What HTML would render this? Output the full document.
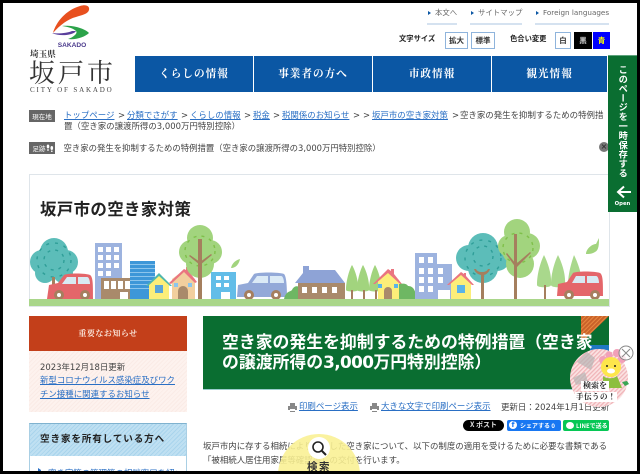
<!DOCTYPE html>
<html lang="ja"><head><meta charset="utf-8"><title>空き家の発生を抑制するための特例措置</title>
<style>
html,body{margin:0;padding:0;background:#fff;width:640px;height:474px;overflow:hidden}
#p{position:relative;width:640px;height:474px;overflow:hidden;background:#fff;font-family:"DejaVu Sans","Noto Sans CJK JP",sans-serif;color:#444;font-size:8.45px}
#p div,#p a{position:absolute;white-space:nowrap;line-height:1}
#p .j,#p .j a{font-family:"Noto Sans CJK JP",sans-serif}
a{color:#2a6fc4;text-decoration:underline}
.se{font-family:"Noto Serif CJK SC","Liberation Serif",serif}
#p .nav{top:56px;height:36px;background:#0b57a4;color:#fff;font-weight:700;font-size:10.6px;letter-spacing:1px;text-align:center;line-height:36px}
#p .lab{left:29px;width:26px;height:12px;background:#666;color:#fff;font-size:6.5px;line-height:12px;text-align:center}
#p .btn{top:32px;height:15px;border:1px solid #8fb4dc;background:#fff;color:#333;font-size:7.5px;font-weight:700;text-align:center;line-height:15px}
.ul{top:23px;height:2px;background:#d5e2f0}
.tl{top:9px;font-size:7.4px;color:#666}
.tri{width:0;height:0;border-left:3px solid #0b57a4;border-top:2px solid transparent;border-bottom:2px solid transparent;top:11px}
</style></head><body><div id="p">

<!-- logo -->
<svg style="position:absolute;left:0;top:0" width="130" height="60" viewBox="0 0 130 60">
<path d="M53 33C56 22 66 10 80 6c6-2 10 0 9 4-1 4-7 5-13 7-8 2-16 8-23 16z" fill="#e8501f"/>
<path d="M62 26c10-1 22 2 27 7-4 4-13 7-21 6 6-2 10-6 8-8-3-3-8-4-14-5z" fill="#2ca34a"/>
<path d="M52 33c6 1 16 0 20-2h4c-2 4-16 6-24 2z" fill="#5a3f9c"/>
<text x="72" y="47" font-size="6.6" font-weight="700" fill="#4a3a8c" text-anchor="middle" font-family="Liberation Sans">SAKADO</text>
</svg>
<div class="se" style="left:30px;top:50px;font-size:8.6px;font-weight:700;color:#333">埼玉県</div>
<div class="se" style="left:29px;top:59px;font-size:26px;letter-spacing:3px;color:#333">坂戸市</div>
<div style="left:30px;top:87px;font-size:7px;letter-spacing:1.85px;color:#444;font-family:'Liberation Serif',serif">CITY OF SAKADO</div>

<!-- top links -->
<div class="tri" style="left:428px"></div><div class="tl j" style="left:435px">本文へ</div><div class="ul" style="left:427px;width:30px"></div>
<div class="tri" style="left:471px"></div><div class="tl j" style="left:478px">サイトマップ</div><div class="ul" style="left:470px;width:52px"></div>
<div class="tri" style="left:536px"></div><div class="tl" style="left:543px;font-size:7.2px">Foreign languages</div><div class="ul" style="left:535px;width:74px"></div>

<div class="j" style="left:399px;top:36px;font-size:7.3px;font-weight:700;color:#222">文字サイズ</div>
<div class="btn j" style="left:445px;width:21px">拡大</div>
<div class="btn j" style="left:471px;width:22px">標準</div>
<div class="j" style="left:510px;top:36px;font-size:7.3px;font-weight:700;color:#222">色合い変更</div>
<div class="btn j" style="left:555px;width:14px">白</div>
<div class="btn j" style="left:574px;width:16px;background:#000;color:#ccc;border-color:#000">黒</div>
<div class="btn j" style="left:593px;width:15px;background:#00f;color:#ff0;border-color:#00f">青</div>

<!-- nav -->
<div class="nav se" style="left:135px;width:118px">くらしの情報</div>
<div class="nav se" style="left:254px;width:118px">事業者の方へ</div>
<div class="nav se" style="left:373px;width:118px">市政情報</div>
<div class="nav se" style="left:492px;width:115px">観光情報</div>

<!-- breadcrumb -->
<div class="lab j" style="top:110px">現在地</div>
<a class="j" href="#" style="left:64px;top:111px">トップページ</a><div style="left:118px;top:111px">&gt;</div>
<a class="j" href="#" style="left:127px;top:111px">分類でさがす</a><div style="left:181px;top:111px">&gt;</div>
<a class="j" href="#" style="left:190px;top:111px">くらしの情報</a><div style="left:244px;top:111px">&gt;</div>
<a class="j" href="#" style="left:253px;top:111px">税金</a><div style="left:273px;top:111px">&gt;</div>
<a class="j" href="#" style="left:282px;top:111px">税関係のお知らせ</a><div style="left:353px;top:111px">&gt;</div><div style="left:363px;top:111px">&gt;</div>
<a class="j" href="#" style="left:372px;top:111px">坂戸市の空き家対策</a><div style="left:452px;top:111px">&gt;</div>
<div class="j" style="left:460px;top:111px">空き家の発生を抑制するための特例措</div>
<div style="left:64px;top:122px">置（空き家の譲渡所得の3,000万円特別控除）</div>
<div class="lab j" style="top:142px;text-indent:-6px">足跡</div>
<svg style="position:absolute;left:46px;top:144px" width="8" height="8" viewBox="0 0 8 8"><ellipse cx="2" cy="2.5" rx="1.3" ry="2" fill="#fff"/><ellipse cx="5.8" cy="4" rx="1.3" ry="2" fill="#fff"/><circle cx="2" cy="6" r=".9" fill="#fff"/><circle cx="5.8" cy="7.2" r=".8" fill="#fff"/></svg>
<div style="left:63.5px;top:144px;font-size:8.38px">空き家の発生を抑制するための特例措置（空き家の譲渡所得の3,000万円特別控除）</div>
<div style="left:599px;top:142px;width:10px;height:10px;border-radius:50%;background:#777;color:#222;font-size:8px;line-height:10px;text-align:center">×</div>

<!-- banner -->
<div style="left:29px;top:174px;width:579px;height:131px;border:1px solid #dfe5ea;background:#fff"></div>
<div class="j" style="left:40px;top:200px;font-size:16.5px;font-weight:700;color:#222;letter-spacing:.3px">坂戸市の空き家対策</div>

<svg style="position:absolute;left:0;top:0" width="640" height="474" viewBox="0 0 640 474">
<!-- left teal tree -->
<g fill="#5cbdb9"><circle cx="54" cy="252" r="14"/><circle cx="42" cy="262" r="12"/><circle cx="66" cy="262" r="12"/><circle cx="45" cy="273" r="10"/><circle cx="63" cy="273" r="10"/><circle cx="54" cy="262" r="14"/></g>
<circle cx="54" cy="260" r="17" fill="none" stroke="#2f9e98" stroke-width="1.4" stroke-dasharray="3 6"/>
<circle cx="54" cy="260" r="10" fill="none" stroke="#2f9e98" stroke-width="1.4" stroke-dasharray="3 5"/>
<path d="M52 295v-18h3v18z" fill="#a57f5e"/>
<!-- red car -->
<path d="M47 299l2-14 9-2 6-8c3-2 22-2 26 0 3 2 3 9 3 24z" fill="#e4666a"/>
<path d="M62 284l5-7h9v7zM78 277h9c2 0 3 4 3 7H78z" fill="#d8eaf3"/>
<circle cx="59" cy="295" r="5" fill="#a57f5e"/><circle cx="59" cy="295" r="2" fill="#fff"/><circle cx="85" cy="295" r="5" fill="#a57f5e"/><circle cx="85" cy="295" r="2" fill="#fff"/>
<!-- blue grid building -->
<rect x="95" y="243" width="27" height="56" fill="#9db3df"/>
<g fill="#fff"><rect x="98" y="247" width="5" height="5"/><rect x="106" y="247" width="5" height="5"/><rect x="114" y="247" width="5" height="5"/><rect x="98" y="255" width="5" height="5"/><rect x="106" y="255" width="5" height="5"/><rect x="114" y="255" width="5" height="5"/><rect x="98" y="263" width="5" height="5"/><rect x="106" y="263" width="5" height="5"/><rect x="114" y="263" width="5" height="5"/><rect x="98" y="271" width="5" height="5"/><rect x="106" y="271" width="5" height="5"/></g>
<!-- brown shop -->
<rect x="101" y="278" width="32" height="21" fill="#a98a6b"/>
<g fill="#fff"><rect x="104" y="281" width="5" height="8"/><rect x="111" y="281" width="5" height="8"/><rect x="118" y="281" width="5" height="8"/><rect x="125" y="281" width="5" height="8"/><rect x="120" y="292" width="8" height="7"/></g>
<!-- striped tower -->
<rect x="130" y="261" width="25" height="38" fill="#3d97d8"/>
<g fill="#8cc5ec"><rect x="130" y="264" width="25" height="1"/><rect x="130" y="268" width="25" height="1"/><rect x="130" y="272" width="25" height="1"/><rect x="130" y="276" width="25" height="1"/><rect x="130" y="280" width="25" height="1"/><rect x="130" y="284" width="25" height="1"/><rect x="130" y="288" width="25" height="1"/></g>
<!-- yellow house -->
<path d="M149 299v-14l10-10 10 10v14z" fill="#fcee79"/><path d="M146 286l13-13 13 13-2 0-11-10-11 10z" fill="#4fb7ad"/>
<rect x="155" y="285" width="8" height="8" fill="#5aa5d8"/>
<!-- peach house -->
<path d="M172 299v-20l12-9 11 9v20z" fill="#f2cf9e"/><path d="M169 283l15-14 2 1v-3h4v6l7 9-2 1-11-11-13 12z" fill="#ea7580"/>
<path d="M178 299v-8a5 5 0 0 1 10 0v8z" fill="#a98a6b"/><rect x="174" y="283" width="4" height="4" fill="#8cc5ec"/><rect x="188" y="283" width="4" height="4" fill="#8cc5ec"/>
<!-- green tree -->
<g fill="#a2d47e"><circle cx="200" cy="238" r="13"/><circle cx="191" cy="252" r="12"/><circle cx="210" cy="252" r="12"/><circle cx="200" cy="264" r="14"/><circle cx="200" cy="250" r="14"/></g>
<circle cx="200" cy="251" r="15" fill="none" stroke="#7fc04a" stroke-width="1.4" stroke-dasharray="3 5"/>
<path d="M198 299v-60h4v60zM200 265l-11-9 1-1 10 7 11-8 1 1z" fill="#a57f5e"/>
<!-- light-blue bldg -->
<rect x="211" y="272" width="25" height="27" fill="#62bde8"/>
<g fill="#fff"><rect x="216" y="276" width="5" height="4"/><rect x="224" y="276" width="5" height="4"/><rect x="216" y="283" width="5" height="4"/><rect x="224" y="283" width="5" height="4"/><rect x="221" y="292" width="9" height="7"/></g>
<path d="M231 268c1-5 5-8 9-9-1 5-4 9-9 9z" fill="#a2d47e"/>
<!-- blue car -->
<path d="M237 297l1-12 10-2 6-9c3-2 26-2 30 0 2 2 3 9 3 23z" fill="#93a9d8"/>
<path d="M252 283l5-7h11v7zM270 276h11c2 0 3 4 3 7h-14z" fill="#dbeaf6"/>
<circle cx="249" cy="295" r="5" fill="#a57f5e"/><circle cx="249" cy="295" r="2" fill="#fff"/><circle cx="276" cy="295" r="5" fill="#a57f5e"/><circle cx="276" cy="295" r="2" fill="#fff"/>
<!-- bush -->
<path d="M284 299c2-8 6-7 8-9 2-5 8-5 8 0v9z" fill="#6eb763"/>
<!-- blue roof house -->
<rect x="298" y="283" width="47" height="16" fill="#a98a6b"/>
<path d="M295 283l8-10v-7h6v4h26l10 13z" fill="#8ea3d6"/>
<g fill="#fff"><rect x="302" y="287" width="5" height="6"/><rect x="312" y="287" width="5" height="6"/><rect x="322" y="287" width="5" height="6"/><rect x="332" y="287" width="5" height="6"/></g>
<!-- cones -->
<g fill="#a2d47e"><path d="M346 290c0-10 4-22 6-25 2 3 7 15 6 25 0 2-12 2-12 0z"/><path d="M357 290c0-10 4-22 6-25 2 3 7 15 6 25 0 2-12 2-12 0z"/><path d="M369 290c0-10 4-22 6-25 2 3 7 15 6 25 0 2-12 2-12 0z"/></g>
<g fill="#a57f5e"><rect x="351" y="290" width="2" height="9"/><rect x="363" y="290" width="2" height="9"/><rect x="375" y="290" width="2" height="9"/></g>
<!-- yellow house 2 -->
<path d="M378 299v-19l10-9 11 9v19z" fill="#fcee79"/><path d="M373 284l15-15 3 2v-2h3v5l8 10-2 0-12-11-13 11z" fill="#ea7580"/>
<path d="M384 299v-8a4 4 0 0 1 8 0v8z" fill="#a98a6b"/><rect x="378" y="284" width="4" height="4" fill="#5ab3e8"/><rect x="394" y="284" width="4" height="4" fill="#5ab3e8"/>
<path d="M399 299v-15c5-1 8 0 9 2 5 0 8 4 8 13z" fill="#6eb763"/>
<!-- blue bldg right -->
<path d="M415 299v-46h22v11h15v35z" fill="#9db3df"/>
<g fill="#fff"><rect x="419" y="257" width="5" height="6"/><rect x="428" y="257" width="5" height="6"/><rect x="419" y="268" width="5" height="6"/><rect x="428" y="268" width="5" height="6"/><rect x="438" y="268" width="5" height="6"/><rect x="419" y="277" width="5" height="6"/><rect x="428" y="277" width="5" height="6"/><rect x="438" y="277" width="5" height="6"/><rect x="419" y="286" width="5" height="6"/><rect x="428" y="286" width="5" height="6"/><rect x="438" y="290" width="12" height="9"/></g>
<!-- teal tree R -->
<g fill="#5cbdb9"><circle cx="483" cy="248" r="15"/><circle cx="469" cy="258" r="13"/><circle cx="497" cy="258" r="13"/><circle cx="483" cy="268" r="15"/><circle cx="483" cy="258" r="15"/></g>
<circle cx="483" cy="258" r="18" fill="none" stroke="#2f9e98" stroke-width="1.4" stroke-dasharray="3 6"/>
<circle cx="483" cy="256" r="10" fill="none" stroke="#2f9e98" stroke-width="1.4" stroke-dasharray="3 5"/>
<path d="M481 299v-24c-4-1-6-3-7-6l2 0c1 2 3 3 6 3 3 0 5-1 6-3l2 0c-1 3-3 5-6 6v24z" fill="#a57f5e"/>
<!-- yellow house 3 -->
<path d="M451 299v-16l10-9 10 9v16z" fill="#fcee79"/><path d="M447 285l14-13 3 2v-1h2v3l8 9h-2l-11-10-12 10z" fill="#ea7580"/>
<rect x="457" y="285" width="8" height="8" fill="#5ab3e8"/>
<!-- green tree R -->
<g fill="#a2d47e"><circle cx="517" cy="232" r="13"/><circle cx="509" cy="246" r="11"/><circle cx="527" cy="246" r="13"/><circle cx="520" cy="264" r="14"/><circle cx="517" cy="250" r="15"/></g>
<circle cx="518" cy="248" r="15" fill="none" stroke="#7fc04a" stroke-width="1.4" stroke-dasharray="3 5"/>
<path d="M514 299v-65h3v65zM516 268l-10-14 1-1 9 11 14-12 1 1z" fill="#a57f5e"/>
<!-- cones R -->
<g fill="#a9d88c"><path d="M537 285c0-12 4-24 7-30 3 6 8 18 7 30 0 3-14 3-14 0z"/><path d="M551 285c0-12 4-24 7-30 3 6 8 18 7 30 0 3-14 3-14 0z"/><path d="M568 285c0-12 4-24 6-30 3 6 8 18 8 30z"/></g>
<rect x="544" y="285" width="2" height="14" fill="#a57f5e"/>
<path d="M586 254c0-5 6-10 10-10l3-6c0 6 0 12-4 14-3 2-6 2-9 2z" fill="#a2d47e"/>
<!-- red car R -->
<path d="M557 296l1-12 9-2 6-9c3-2 22-2 27 0 3 2 3 9 3 23z" fill="#e4666a"/>
<path d="M572 283l4-7h9v7zM587 276h9c2 0 3 4 3 7h-12z" fill="#d8eaf3"/>
<circle cx="569" cy="295" r="5" fill="#a57f5e"/><circle cx="569" cy="295" r="2" fill="#fff"/><circle cx="595" cy="295" r="5" fill="#a57f5e"/><circle cx="595" cy="295" r="2" fill="#fff"/>
<rect x="29" y="299" width="580" height="7" fill="#a9d68a"/>
</svg>

<!-- notice -->
<div class="se" style="left:29px;top:316px;width:158px;height:35px;background:#c33f1a;color:#fbe7dc;font-size:8px;font-weight:700;text-align:center;line-height:35px;letter-spacing:.5px">重要なお知らせ</div>
<div style="left:29px;top:351px;width:158px;height:61px;background:repeating-linear-gradient(135deg,#fdf2ee 0 2px,#faebe6 2px 3px)"></div>
<div style="left:40px;top:363px;color:#444">2023年12月18日更新</div>
<a class="j" href="#" style="left:40px;top:376px">新型コロナウイルス感染症及びワク</a>
<a class="j" href="#" style="left:40px;top:390px">チン接種に関連するお知らせ</a>

<div style="left:29px;top:423px;width:156px;height:48px;border:1px solid #a9cfe4;border-top:1px solid #7fb2cf;border-bottom:0;background:#fff"></div>
<div style="left:30px;top:424px;width:156px;height:32px;background:repeating-linear-gradient(135deg,#bfe0f2 0 2px,#a9d4ec 2px 3px)"></div>
<div class="j" style="left:40px;top:434px;font-size:9.6px;font-weight:700;color:#222;letter-spacing:.85px">空き家を所有している方へ</div>
<svg style="position:absolute;left:37px;top:465px" width="140" height="6" viewBox="0 0 140 6"><path d="M1 3l3 2v1H1z" fill="#2a6fc4"/><text x="11" y="11" font-size="8.45" fill="#2a6fc4" font-family="Noto Sans CJK JP">空き家等の管理等の相談窓口を紹介</text></svg>

<!-- title -->
<div style="left:203px;top:316px;width:406px;height:74px;background:#0a6e31;border-bottom:1px solid #9cc;box-sizing:border-box"></div>
<svg style="position:absolute;left:581px;top:316px" width="28" height="27"><defs><pattern id="oh" width="3" height="3" patternUnits="userSpaceOnUse" patternTransform="rotate(-45)"><rect width="3" height="3" fill="#c9622a"/><rect width="3" height="1" fill="#e8893f"/></pattern></defs><path d="M0 0H28L0 27z" fill="url(#oh)"/></svg>
<div style="left:590px;top:345px;width:19px;height:20px;background:#1f78c4"></div>
<div style="left:222px;top:334px;font-size:16.85px;font-weight:700;color:#fff">空き家の発生を抑制するための特例措置（空き家</div>
<div style="left:222px;top:354px;font-size:16.85px;font-weight:700;color:#fff">の譲渡所得の<span style="letter-spacing:-.6px">3,000</span>万円特別控除）</div>

<!-- print row -->
<svg style="position:absolute;left:287px;top:402px" width="11" height="11" viewBox="0 0 11 11"><path d="M3 1h5v3H3zM1 4h9v4H8v2H3V8H1z" fill="#888"/><rect x="3" y="7" width="5" height="2" fill="#fff"/></svg>
<a class="j" href="#" style="left:299px;top:402px">印刷ページ表示</a>
<svg style="position:absolute;left:369px;top:402px" width="11" height="11" viewBox="0 0 11 11"><path d="M3 1h5v3H3zM1 4h9v4H8v2H3V8H1z" fill="#888"/><rect x="3" y="7" width="5" height="2" fill="#fff"/></svg>
<a class="j" href="#" style="left:381px;top:402px">大きな文字で印刷ページ表示</a>
<div style="left:501px;top:403px">更新日：2024年1月1日更新</div>

<!-- social -->
<div class="j" style="left:463px;top:420px;width:41px;height:11px;border-radius:6px;background:#000;color:#ddd;font-size:7px;line-height:11px;text-align:center;font-weight:700">X ポスト</div>
<div class="j" style="left:507px;top:420px;width:54px;height:11px;border-radius:2px;background:#1877f2;color:#fff;font-size:6px;line-height:11px;text-indent:13px;font-weight:700">シェアする 0</div>
<div style="left:509px;top:421px;width:8px;height:8px;border-radius:50%;background:#fff;color:#1877f2;font-size:7px;line-height:9px;text-align:center;font-weight:700">f</div>
<div class="j" style="left:563px;top:420px;width:46px;height:11px;border-radius:2px;background:#06c755;color:#fff;font-size:6px;line-height:11px;text-indent:13px;font-weight:700">LINEで送る</div>
<div style="left:566px;top:422px;width:8px;height:7px;border-radius:50%;background:#fff"></div>

<!-- body text -->
<div class="j" style="left:203px;top:442px">坂戸市内に存する相続により取得した空き家について、以下の制度の適用を受けるために必要な書類である</div>
<div class="j" style="left:203px;top:456px">「被相続人居住用家屋等確認書」の交付を行います。</div>

<!-- search bubble -->
<svg style="position:absolute;left:270px;top:430px" width="100" height="44" viewBox="270 430 100 44"><circle cx="319" cy="475" r="41" fill="#f9f092" fill-opacity=".88"/><circle cx="319" cy="448" r="11" fill="#fff"/><circle cx="318" cy="447" r="5" fill="none" stroke="#222" stroke-width="1.6"/><path d="M322 451l4 4" stroke="#222" stroke-width="2"/><text x="307" y="470" font-size="10.5" font-weight="700" fill="#333" letter-spacing="1.5" font-family="Noto Sans CJK JP">検索</text></svg>

<!-- mascot -->
<svg style="position:absolute;left:560px;top:340px" width="77" height="75" viewBox="560 340 77 75">
<defs><pattern id="h" width="3" height="3" patternUnits="userSpaceOnUse" patternTransform="rotate(45)"><rect width="3" height="3" fill="#fbe3e3"/><rect width="1.3" height="3" fill="#f0b4b8"/></pattern></defs>
<circle cx="599" cy="378" r="29" fill="url(#h)"/>
<path d="M577 362l10-10 8 6-4 12zM573 378l12-6 3 10-12 3z" fill="#b6b4b4" opacity=".7"/>
<g fill="#f2a0b8"><circle cx="603" cy="360" r="4"/><circle cx="609" cy="355" r="3.5"/><circle cx="617" cy="353" r="4"/><circle cx="622" cy="359" r="4"/></g>
<path d="M603 376c4 3 10 3 14 0l5 12h-19z" fill="#8cbf3f"/>
<circle cx="611" cy="367" r="10" fill="#fde64b"/>
<circle cx="607" cy="366" r="1" fill="#222"/><circle cx="615" cy="366" r="1" fill="#222"/><ellipse cx="611" cy="371" rx="4" ry="2.5" fill="#fff"/>
<path d="M622 382l5-1 2 3-4 2z" fill="#3aa655"/>
<circle cx="626" cy="353" r="7" fill="#fff" fill-opacity=".75" stroke="#888"/>
<path d="M622 349l8 8M630 349l-8 8" stroke="#888"/>
</svg>
<div class="se" style="left:581px;top:381px;font-size:8px;font-weight:700;color:#222;background:#fff;padding:1px 2px">検索を</div>
<div class="se" style="left:575px;top:392px;font-size:7.5px;font-weight:700;color:#222;background:#fff;padding:1px 1px;letter-spacing:.5px">手伝うの！</div>

<!-- side tab -->
<div style="left:608px;top:55px;width:29px;height:157px;background:#0a6e31;border-top:1px solid #5da37c;box-sizing:border-box"></div>
<div class="j" style="left:618px;top:65px;writing-mode:vertical-rl;font-size:9.2px;font-weight:700;color:#fff;letter-spacing:.2px">このページを一時保存する</div>
<svg style="position:absolute;left:616px;top:185px" width="16" height="14" viewBox="0 0 16 14"><path d="M15 7H3M8 1.5L2 7l6 5.5" fill="none" stroke="#fff" stroke-width="2"/></svg>
<div style="left:608px;top:202px;width:29px;text-align:center;font-size:5.3px;font-weight:700;color:#fff">Open</div>

<!-- black frame -->
<div style="left:0;top:0;width:640px;height:3px;background:#000"></div>
<div style="left:0;top:471px;width:640px;height:3px;background:#000"></div>
<div style="left:0;top:0;width:3px;height:474px;background:#000"></div>
<div style="left:637px;top:0;width:3px;height:474px;background:#000"></div>
</div></body></html>
